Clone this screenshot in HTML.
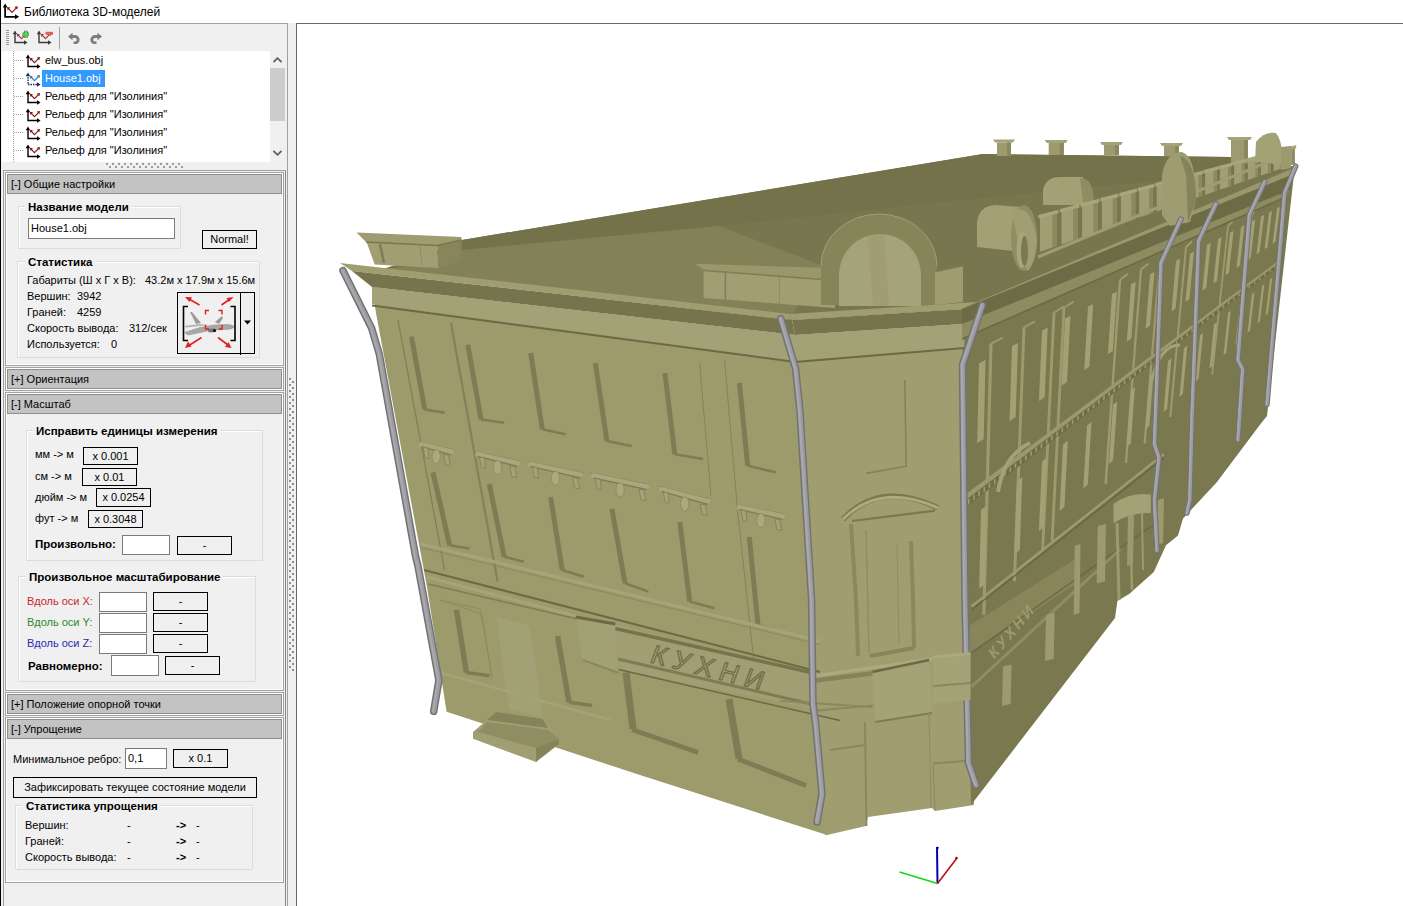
<!DOCTYPE html>
<html><head><meta charset="utf-8">
<style>
*{box-sizing:border-box}
html,body{margin:0;padding:0}
body{width:1403px;height:906px;overflow:hidden;position:relative;background:#fff;font-family:"Liberation Sans",sans-serif;font-size:11px;color:#000}
.a{position:absolute}
.t{position:absolute;white-space:nowrap;line-height:14px;height:14px}
.b{font-weight:bold;font-size:11.5px}
.hdr{position:absolute;left:7px;width:275px;height:20px;border:1px solid #8e8e8e;background:#c3c3c3}
.hdr span{position:absolute;left:3px;top:2px;line-height:14px;white-space:nowrap}
.sec{position:absolute;left:5px;width:279px;border:1px solid #a2a2a2;box-shadow:inset 0 0 0 1px #fff}
.gb{position:absolute;border:1px solid #dcdcdc;box-shadow:inset 1px 1px 0 #fff}
.gt{position:absolute;background:#f0f0f0;padding:0 3px;font-weight:bold;font-size:11.5px;line-height:14px;white-space:nowrap}
.inp{position:absolute;background:#fff;border:1px solid #7a7a7a;}
.btn{position:absolute;background:#f0f0f0;border:1px solid #000;text-align:center;line-height:16px;white-space:nowrap}
</style></head><body>
<!-- left black edge -->
<div class="a" style="left:0;top:0;width:1px;height:906px;background:#000"></div>
<!-- title -->
<svg class="a" style="left:3px;top:3px" width="17" height="17" viewBox="0 0 16 16">
<path d="M2 2.5V13H13" fill="none" stroke="#000" stroke-width="1.6"/>
<path d="M-0.3 4.3L2 0.5L4.3 4.3Z M11.3 10.7L15.2 13L11.3 15.3Z" fill="#000"/>
<path d="M5 5L8.5 8.8L13 4.2" fill="none" stroke="#8b1a1a" stroke-width="1.1"/>
<path d="M3.8 3.8L7 4.3L4.3 7Z M14 3L13.4 6.3L10.8 3.6Z" fill="#8b1a1a"/>
</svg>
<div class="t" style="left:24px;top:5px;font-size:12px;line-height:15px">Библиотека 3D-моделей</div>

<!-- panel -->
<div class="a" style="left:1px;top:23px;width:287px;height:883px;background:#f0f0f0"></div>
<div class="a" style="left:1px;top:23px;width:287px;height:1px;background:#a0a0a0"></div>
<div class="a" style="left:285px;top:170px;width:1px;height:736px;background:#858585"></div>
<div class="a" style="left:287px;top:23px;width:1px;height:883px;background:#a0a0a0"></div>
<!-- splitter -->
<div class="a" style="left:288px;top:23px;width:8px;height:883px;background:#f0f0f0"></div>
<div class="a" style="left:296px;top:23px;width:1px;height:883px;background:#696969"></div>
<div class="a" style="left:289px;top:378px;width:2px;height:290px;background:repeating-linear-gradient(#8e8e8e 0 2px,transparent 2px 6px)"></div>
<div class="a" style="left:292px;top:381px;width:2px;height:290px;background:repeating-linear-gradient(#8e8e8e 0 2px,transparent 2px 6px)"></div>
<div class="a" style="left:296px;top:23px;width:1107px;height:1px;background:#696969"></div>

<!-- toolbar -->
<div class="a" style="left:6px;top:30px;width:3px;height:16px;background:repeating-linear-gradient(#9a9a9a 0 1px,transparent 1px 2px)"></div>
<svg class="a" style="left:13px;top:30px" width="16" height="16" viewBox="0 0 16 16">
<path d="M2 2.5V12.5H12.5" fill="none" stroke="#3a3a3a" stroke-width="1.4"/>
<path d="M-0.2 4.2L2 0.6L4.2 4.2Z M11 10.3L14.6 12.5L11 14.7Z" fill="#3a3a3a"/>
<path d="M5 5L8.5 8.6L13 4" fill="none" stroke="#a04040" stroke-width="1.1"/>
<path d="M3.8 3.8L7 4.3L4.3 7Z M14 3L13.4 6.3L10.8 3.6Z" fill="#a04040"/><path d="M9.5 4.3H16.3M12.9 0.8V7.8" stroke="#2e8a2e" stroke-width="3.6"/><path d="M9.8 4.3H16M12.9 1.1V7.5" stroke="#5ccf5c" stroke-width="2.2"/>
</svg><svg class="a" style="left:37px;top:30px" width="16" height="16" viewBox="0 0 16 16">
<path d="M2 2.5V12.5H12.5" fill="none" stroke="#3a3a3a" stroke-width="1.4"/>
<path d="M-0.2 4.2L2 0.6L4.2 4.2Z M11 10.3L14.6 12.5L11 14.7Z" fill="#3a3a3a"/>
<path d="M5 5L8.5 8.6L13 4" fill="none" stroke="#a04040" stroke-width="1.1"/>
<path d="M3.8 3.8L7 4.3L4.3 7Z M14 3L13.4 6.3L10.8 3.6Z" fill="#a04040"/><path d="M8.5 3.3H16" stroke="#e06050" stroke-width="3"/>
</svg>
<div class="a" style="left:59px;top:27px;width:1px;height:22px;background:#a0a0a0"></div>
<svg class="a" style="left:67px;top:32px" width="13" height="12" viewBox="0 0 13 12"><path d="M1 4.5L5.5 0.8V8.2Z" fill="#7c7c7c"/><path d="M4.5 4.5H8A3.2 3.2 0 0 1 8 10.9H6.5" fill="none" stroke="#7c7c7c" stroke-width="2.8"/></svg>
<svg class="a" style="left:90px;top:32px" width="13" height="12" viewBox="0 0 13 12"><path d="M12 4.5L7.5 0.8V8.2Z" fill="#7c7c7c"/><path d="M8.5 4.5H5A3.2 3.2 0 0 0 5 10.9H6.5" fill="none" stroke="#7c7c7c" stroke-width="2.8"/></svg>
<!-- tree -->
<div class="a" style="left:2px;top:51px;width:268px;height:111px;background:#fff"></div>
<div class="a" style="left:13px;top:51px;width:1px;height:111px;background:repeating-linear-gradient(#a0a0a0 0 1px,transparent 1px 2px)"></div>
<div class="a" style="left:14px;top:60px;width:9px;height:1px;background:repeating-linear-gradient(90deg,#a0a0a0 0 1px,transparent 1px 2px)"></div>
<svg class="a" style="left:26px;top:54px" width="16" height="16" viewBox="0 0 16 16">
<path d="M2 2.5V12.5H12.5" fill="none" stroke="#000" stroke-width="1.4"/>
<path d="M-0.2 4.2L2 0.6L4.2 4.2Z M11 10.3L14.6 12.5L11 14.7Z" fill="#000"/>
<path d="M5 5L8.5 8.6L13 4" fill="none" stroke="#8b1a1a" stroke-width="1.1"/>
<path d="M3.8 3.8L7 4.3L4.3 7Z M14 3L13.4 6.3L10.8 3.6Z" fill="#8b1a1a"/>
</svg><div class="t" style="left:45px;top:53px">elw_bus.obj</div>
<div class="a" style="left:14px;top:78px;width:9px;height:1px;background:repeating-linear-gradient(90deg,#a0a0a0 0 1px,transparent 1px 2px)"></div>
<svg class="a" style="left:26px;top:72px" width="16" height="16" viewBox="0 0 16 16">
<path d="M2 2.5V12.5H12.5" fill="none" stroke="#1c2c5c" stroke-width="1.4" stroke-dasharray="1.5 1"/>
<path d="M-0.2 4.2L2 0.6L4.2 4.2Z M11 10.3L14.6 12.5L11 14.7Z" fill="#1c2c5c"/>
<path d="M5 5L8.5 8.6L13 4" fill="none" stroke="#3a78b8" stroke-width="1.1"/>
<path d="M3.8 3.8L7 4.3L4.3 7Z M14 3L13.4 6.3L10.8 3.6Z" fill="#3a78b8"/>
</svg><div class="a" style="left:42px;top:70px;width:63px;height:17px;background:#3399ff"></div><div class="t" style="left:45px;top:71px;color:#fff">House1.obj</div>
<div class="a" style="left:14px;top:96px;width:9px;height:1px;background:repeating-linear-gradient(90deg,#a0a0a0 0 1px,transparent 1px 2px)"></div>
<svg class="a" style="left:26px;top:90px" width="16" height="16" viewBox="0 0 16 16">
<path d="M2 2.5V12.5H12.5" fill="none" stroke="#000" stroke-width="1.4"/>
<path d="M-0.2 4.2L2 0.6L4.2 4.2Z M11 10.3L14.6 12.5L11 14.7Z" fill="#000"/>
<path d="M5 5L8.5 8.6L13 4" fill="none" stroke="#8b1a1a" stroke-width="1.1"/>
<path d="M3.8 3.8L7 4.3L4.3 7Z M14 3L13.4 6.3L10.8 3.6Z" fill="#8b1a1a"/>
</svg><div class="t" style="left:45px;top:89px">Рельеф для "Изолиния"</div>
<div class="a" style="left:14px;top:114px;width:9px;height:1px;background:repeating-linear-gradient(90deg,#a0a0a0 0 1px,transparent 1px 2px)"></div>
<svg class="a" style="left:26px;top:108px" width="16" height="16" viewBox="0 0 16 16">
<path d="M2 2.5V12.5H12.5" fill="none" stroke="#000" stroke-width="1.4"/>
<path d="M-0.2 4.2L2 0.6L4.2 4.2Z M11 10.3L14.6 12.5L11 14.7Z" fill="#000"/>
<path d="M5 5L8.5 8.6L13 4" fill="none" stroke="#8b1a1a" stroke-width="1.1"/>
<path d="M3.8 3.8L7 4.3L4.3 7Z M14 3L13.4 6.3L10.8 3.6Z" fill="#8b1a1a"/>
</svg><div class="t" style="left:45px;top:107px">Рельеф для "Изолиния"</div>
<div class="a" style="left:14px;top:132px;width:9px;height:1px;background:repeating-linear-gradient(90deg,#a0a0a0 0 1px,transparent 1px 2px)"></div>
<svg class="a" style="left:26px;top:126px" width="16" height="16" viewBox="0 0 16 16">
<path d="M2 2.5V12.5H12.5" fill="none" stroke="#000" stroke-width="1.4"/>
<path d="M-0.2 4.2L2 0.6L4.2 4.2Z M11 10.3L14.6 12.5L11 14.7Z" fill="#000"/>
<path d="M5 5L8.5 8.6L13 4" fill="none" stroke="#8b1a1a" stroke-width="1.1"/>
<path d="M3.8 3.8L7 4.3L4.3 7Z M14 3L13.4 6.3L10.8 3.6Z" fill="#8b1a1a"/>
</svg><div class="t" style="left:45px;top:125px">Рельеф для "Изолиния"</div>
<div class="a" style="left:14px;top:150px;width:9px;height:1px;background:repeating-linear-gradient(90deg,#a0a0a0 0 1px,transparent 1px 2px)"></div>
<svg class="a" style="left:26px;top:144px" width="16" height="16" viewBox="0 0 16 16">
<path d="M2 2.5V12.5H12.5" fill="none" stroke="#000" stroke-width="1.4"/>
<path d="M-0.2 4.2L2 0.6L4.2 4.2Z M11 10.3L14.6 12.5L11 14.7Z" fill="#000"/>
<path d="M5 5L8.5 8.6L13 4" fill="none" stroke="#8b1a1a" stroke-width="1.1"/>
<path d="M3.8 3.8L7 4.3L4.3 7Z M14 3L13.4 6.3L10.8 3.6Z" fill="#8b1a1a"/>
</svg><div class="t" style="left:45px;top:143px">Рельеф для "Изолиния"</div>
<div class="a" style="left:270px;top:51px;width:15px;height:111px;background:#f0f0f0"></div>
<div class="a" style="left:270px;top:68px;width:15px;height:53px;background:#cdcdcd"></div>
<svg class="a" style="left:273px;top:57px" width="9" height="6" viewBox="0 0 9 6"><path d="M0.5 5L4.5 1.2L8.5 5" fill="none" stroke="#606060" stroke-width="1.8"/></svg>
<svg class="a" style="left:273px;top:150px" width="9" height="6" viewBox="0 0 9 6"><path d="M0.5 1L4.5 4.8L8.5 1" fill="none" stroke="#606060" stroke-width="1.8"/></svg>
<div class="a" style="left:106px;top:163px;width:78px;height:2px;background:repeating-linear-gradient(90deg,#9a9a9a 0 2px,transparent 2px 6px)"></div>
<div class="a" style="left:109px;top:166px;width:75px;height:2px;background:repeating-linear-gradient(90deg,#9a9a9a 0 2px,transparent 2px 6px)"></div>


<!-- outer container -->
<div class="a" style="left:3px;top:170px;width:1px;height:736px;background:#a0a0a0"></div>
<div class="a" style="left:3px;top:170px;width:283px;height:1px;background:#a0a0a0"></div>

<!-- section 1 -->
<div class="sec" style="top:172px;height:194px"></div>
<div class="hdr" style="top:174px"><span>[-] Общие настройки</span></div>
<!-- section 2 -->
<div class="sec" style="top:367px;height:24px"></div>
<div class="hdr" style="top:369px"><span>[+] Ориентация</span></div>
<!-- section 3 -->
<div class="sec" style="top:392px;height:299px"></div>
<div class="hdr" style="top:394px"><span>[-] Масштаб</span></div>
<!-- section 4 -->
<div class="sec" style="top:692px;height:24px"></div>
<div class="hdr" style="top:694px"><span>[+] Положение опорной точки</span></div>
<!-- section 5 -->
<div class="sec" style="top:717px;height:166px"></div>
<div class="hdr" style="top:719px"><span>[-] Упрощение</span></div>

<div class="gb" style="left:18px;top:206px;width:163px;height:43px"></div>
<div class="gt" style="left:25px;top:200px">Название модели</div>
<div class="inp" style="left:28px;top:218px;width:147px;height:21px;padding-left:2px;line-height:19px">House1.obj</div>
<div class="btn" style="left:202px;top:230px;width:55px;height:19px;line-height:17px">Normal!</div>
<div class="gb" style="left:17px;top:261px;width:243px;height:97px"></div>
<div class="gt" style="left:25px;top:255px">Статистика</div>
<div class="t" style="left:27px;top:273px;">Габариты (Ш x Г x В):</div>
<div class="t" style="left:145px;top:273px;">43.2м x 17.9м x 15.6м</div>
<div class="t" style="left:27px;top:289px;">Вершин:</div>
<div class="t" style="left:77px;top:289px;">3942</div>
<div class="t" style="left:27px;top:305px;">Граней:</div>
<div class="t" style="left:77px;top:305px;">4259</div>
<div class="t" style="left:27px;top:321px;">Скорость вывода:</div>
<div class="t" style="left:129px;top:321px;">312/сек</div>
<div class="t" style="left:27px;top:337px;">Используется:</div>
<div class="t" style="left:111px;top:337px;">0</div>
<div class="a" style="left:177px;top:292px;width:78px;height:62px;border:1px solid #000;background:#f0f0f0"></div>
<div class="a" style="left:240px;top:292px;width:1px;height:63px;background:#000"></div>
<svg class="a" style="left:177px;top:292px" width="79" height="63" viewBox="177 292 79 63">
<path d="M244 320.5H251L247.5 324.5Z" fill="#000"/>
<path d="M188 306.5H183.5V340.5H188M230.5 306.5H235V340.5H230.5" fill="none" stroke="#000" stroke-width="1.6"/>
<g fill="none" stroke="#e02020" stroke-width="1.6">
<path d="M199.5 305L189 299"/><path d="M221.5 305L230 299"/><path d="M201.5 337.5L189 345.5"/><path d="M218 337.5L228 345"/>
</g>
<g fill="#e02020">
<path d="M185 297L192 297.2L189.5 302Z"/><path d="M233.5 297L229 302L226.5 298Z"/><path d="M185 348L188 341.5L191.5 346.5Z"/><path d="M231.5 348L225 347L228.5 342Z"/>
</g>
<path d="M184.5 332.5L200 327.5L214 325L228 324.5Q234 325 234 327Q233 329 226 329.5L212 330L188 335Z" fill="#a8a8a8" stroke="#888" stroke-width="0.5"/>
<path d="M184 326L200 324L210 325L186 327.5Z" fill="#b4b4b4"/>
<path d="M190 312L192 312L201 323L196 324Z" fill="#9a9a9a"/>
<path d="M215 322L222 316L223 318L219 324Z" fill="#9a9a9a"/>
<path d="M207 329L215 328.5L216 332L209 332.5Z" fill="#777"/><circle cx="214.5" cy="330.5" r="1.6" fill="#111"/>
<g fill="none" stroke="#e02020" stroke-width="1.4">
<path d="M205.5 314.5V310.5H209M218.5 310.5H222V314.5M205.5 325V329H209M218.5 329H222V325"/>
</g>
</svg>

<div class="gb" style="left:26px;top:430px;width:237px;height:131px"></div>
<div class="gt" style="left:33px;top:424px">Исправить единицы измерения</div>
<div class="t" style="left:35px;top:447px;">мм -&gt; м</div>
<div class="btn" style="left:83px;top:447px;width:55px;height:18px;line-height:16px">x 0.001</div>
<div class="t" style="left:35px;top:469px;">см -&gt; м</div>
<div class="btn" style="left:82px;top:468px;width:55px;height:18px;line-height:16px">x 0.01</div>
<div class="t" style="left:35px;top:490px;">дюйм -&gt; м</div>
<div class="btn" style="left:96px;top:488px;width:55px;height:19px;line-height:17px">x 0.0254</div>
<div class="t" style="left:35px;top:511px;">фут -&gt; м</div>
<div class="btn" style="left:88px;top:510px;width:55px;height:18px;line-height:16px">x 0.3048</div>
<div class="t" style="left:35px;top:537px;font-weight:bold;font-size:11.5px">Произвольно:</div>
<div class="inp" style="left:122px;top:535px;width:48px;height:20px;padding-left:2px;line-height:18px"></div>
<div class="btn" style="left:177px;top:536px;width:55px;height:19px;line-height:17px">-</div>
<div class="gb" style="left:18px;top:576px;width:238px;height:106px"></div>
<div class="gt" style="left:26px;top:570px">Произвольное масштабирование</div>
<div class="t" style="left:27px;top:594px;color:#c8282c">Вдоль оси X:</div>
<div class="inp" style="left:99px;top:592px;width:48px;height:20px;padding-left:2px;line-height:18px"></div>
<div class="btn" style="left:153px;top:592px;width:55px;height:19px;line-height:17px">-</div>
<div class="t" style="left:27px;top:615px;color:#2a8a2a">Вдоль оси Y:</div>
<div class="inp" style="left:99px;top:613px;width:48px;height:20px;padding-left:2px;line-height:18px"></div>
<div class="btn" style="left:153px;top:613px;width:55px;height:19px;line-height:17px">-</div>
<div class="t" style="left:27px;top:636px;color:#2a2ab4">Вдоль оси Z:</div>
<div class="inp" style="left:99px;top:634px;width:48px;height:20px;padding-left:2px;line-height:18px"></div>
<div class="btn" style="left:153px;top:634px;width:55px;height:19px;line-height:17px">-</div>
<div class="t" style="left:28px;top:659px;font-weight:bold;font-size:11.5px">Равномерно:</div>
<div class="inp" style="left:111px;top:655px;width:48px;height:21px;padding-left:2px;line-height:19px"></div>
<div class="btn" style="left:165px;top:656px;width:55px;height:19px;line-height:17px">-</div>
<div class="t" style="left:13px;top:752px;">Минимальное ребро:</div>
<div class="inp" style="left:125px;top:748px;width:42px;height:21px;padding-left:2px;line-height:19px">0,1</div>
<div class="btn" style="left:173px;top:749px;width:55px;height:19px;line-height:17px">x 0.1</div>
<div class="btn" style="left:13px;top:777px;width:244px;height:21px;line-height:19px">Зафиксировать текущее состояние модели</div>
<div class="gb" style="left:15px;top:805px;width:238px;height:65px"></div>
<div class="gt" style="left:23px;top:799px">Статистика упрощения</div>
<div class="t" style="left:25px;top:818px;">Вершин:</div>
<div class="t" style="left:127px;top:818px;">-</div>
<div class="t" style="left:176px;top:818px;font-weight:bold">-&gt;</div>
<div class="t" style="left:196px;top:818px;">-</div>
<div class="t" style="left:25px;top:834px;">Граней:</div>
<div class="t" style="left:127px;top:834px;">-</div>
<div class="t" style="left:176px;top:834px;font-weight:bold">-&gt;</div>
<div class="t" style="left:196px;top:834px;">-</div>
<div class="t" style="left:25px;top:850px;">Скорость вывода:</div>
<div class="t" style="left:127px;top:850px;">-</div>
<div class="t" style="left:176px;top:850px;font-weight:bold">-&gt;</div>
<div class="t" style="left:196px;top:850px;">-</div>


<!-- viewport -->
<svg id="vp" class="a" style="left:297px;top:24px" width="1106" height="882" viewBox="297 24 1106 882">
<polygon points="437.0,250.0 462.0,240.0 983.0,154.0 1230.0,157.0 1296.0,167.0 1294.0,176.0 977.0,308.0 790.0,320.0 375.0,272.0" fill="#78764e" />
<polygon points="462.0,240.0 983.0,154.0 1230.0,157.0 1296.0,167.0 1000.0,196.0 719.0,226.0 462.0,250.0" fill="#74724a" />
<polygon points="462.0,250.0 719.0,226.0 823.0,266.0 790.0,318.0 375.0,270.0 437.0,262.0" fill="#838157" />
<polygon points="372.0,287.0 795.0,335.0 827.0,835.0 640.0,775.0 446.6,711.7 427.0,587.0 376.0,313.0" fill="#9d9b6b" />
<polygon points="793.0,335.0 965.0,324.0 974.0,805.0 935.0,811.0 932.0,808.0 868.0,817.0 866.0,826.0 827.0,835.0 825.0,835.0" fill="#a09e70" />
<polygon points="962.0,309.0 1294.0,174.0 1267.0,416.0 1260.7,423.7 1217.0,482.0 1183.0,518.5 1178.0,535.5 1166.0,545.2 1153.8,572.0 1129.5,593.8 1117.4,601.0 1115.0,618.0 971.0,805.0" fill="#7a784e" />
<path d="M398.0 320.0L444.6 570.0" fill="none" stroke="#7f7d55" stroke-width="1.2" stroke-linecap="butt" stroke-linejoin="round" />
<path d="M451.0 323.0L497.6 581.7" fill="none" stroke="#84825a" stroke-width="2.2" stroke-linecap="butt" stroke-linejoin="round" />
<path d="M699.6 363.0L711.0 496.0" fill="none" stroke="#84825a" stroke-width="1" stroke-linecap="butt" stroke-linejoin="round" />
<path d="M724.5 360.0L737.7 512.0" fill="none" stroke="#84825a" stroke-width="1" stroke-linecap="butt" stroke-linejoin="round" />
<path d="M737.7 512.0L757.0 690.0" fill="none" stroke="#84825a" stroke-width="1" stroke-linecap="butt" stroke-linejoin="round" />
<path d="M411.5 336.6L424.7 409.4" fill="none" stroke="#7e7c54" stroke-width="5" stroke-linecap="butt" stroke-linejoin="round" />
<path d="M424.7 409.4L444.6 412.7" fill="none" stroke="#7e7c54" stroke-width="2.5" stroke-linecap="butt" stroke-linejoin="round" />
<path d="M467.8 344.8L481.0 419.4" fill="none" stroke="#7e7c54" stroke-width="5" stroke-linecap="butt" stroke-linejoin="round" />
<path d="M481.0 419.4L504.2 422.7" fill="none" stroke="#7e7c54" stroke-width="2.5" stroke-linecap="butt" stroke-linejoin="round" />
<path d="M530.7 353.0L542.3 429.3" fill="none" stroke="#7e7c54" stroke-width="5" stroke-linecap="butt" stroke-linejoin="round" />
<path d="M542.3 429.3L565.5 434.3" fill="none" stroke="#7e7c54" stroke-width="2.5" stroke-linecap="butt" stroke-linejoin="round" />
<path d="M595.3 363.0L606.9 440.9" fill="none" stroke="#7e7c54" stroke-width="5" stroke-linecap="butt" stroke-linejoin="round" />
<path d="M606.9 440.9L631.7 445.9" fill="none" stroke="#7e7c54" stroke-width="2.5" stroke-linecap="butt" stroke-linejoin="round" />
<path d="M664.9 373.0L674.8 454.2" fill="none" stroke="#7e7c54" stroke-width="5" stroke-linecap="butt" stroke-linejoin="round" />
<path d="M674.8 454.2L703.0 459.0" fill="none" stroke="#7e7c54" stroke-width="2.5" stroke-linecap="butt" stroke-linejoin="round" />
<path d="M739.4 383.0L747.7 465.7" fill="none" stroke="#7e7c54" stroke-width="5" stroke-linecap="butt" stroke-linejoin="round" />
<path d="M747.7 465.7L775.8 472.4" fill="none" stroke="#7e7c54" stroke-width="2.5" stroke-linecap="butt" stroke-linejoin="round" />
<path d="M433.0 472.4L449.6 545.2" fill="none" stroke="#7e7c54" stroke-width="5" stroke-linecap="butt" stroke-linejoin="round" />
<path d="M449.6 545.2L469.4 548.5" fill="none" stroke="#7e7c54" stroke-width="2.5" stroke-linecap="butt" stroke-linejoin="round" />
<path d="M489.3 484.0L504.2 556.8" fill="none" stroke="#7e7c54" stroke-width="5" stroke-linecap="butt" stroke-linejoin="round" />
<path d="M504.2 556.8L524.0 561.8" fill="none" stroke="#7e7c54" stroke-width="2.5" stroke-linecap="butt" stroke-linejoin="round" />
<path d="M550.6 497.2L562.2 570.0" fill="none" stroke="#7e7c54" stroke-width="5" stroke-linecap="butt" stroke-linejoin="round" />
<path d="M562.2 570.0L583.7 576.7" fill="none" stroke="#7e7c54" stroke-width="2.5" stroke-linecap="butt" stroke-linejoin="round" />
<path d="M611.9 508.8L625.0 583.3" fill="none" stroke="#7e7c54" stroke-width="5" stroke-linecap="butt" stroke-linejoin="round" />
<path d="M625.0 583.3L648.3 591.6" fill="none" stroke="#7e7c54" stroke-width="2.5" stroke-linecap="butt" stroke-linejoin="round" />
<path d="M679.8 522.0L689.7 601.5" fill="none" stroke="#7e7c54" stroke-width="5" stroke-linecap="butt" stroke-linejoin="round" />
<path d="M689.7 601.5L714.5 608.2" fill="none" stroke="#7e7c54" stroke-width="2.5" stroke-linecap="butt" stroke-linejoin="round" />
<path d="M749.3 537.0L758.0 625.0" fill="none" stroke="#7e7c54" stroke-width="5" stroke-linecap="butt" stroke-linejoin="round" />
<path d="M758.0 625.0L782.0 632.0" fill="none" stroke="#7e7c54" stroke-width="2.5" stroke-linecap="butt" stroke-linejoin="round" />
<path d="M418.0 441.6L454.5 449.8" fill="none" stroke="#8a885e" stroke-width="1" stroke-linecap="butt" stroke-linejoin="round" />
<path d="M419.0 444.1L453.5 452.3" fill="none" stroke="#a9a77c" stroke-width="5" stroke-linecap="butt" stroke-linejoin="round" />
<path d="M421.0 446.6L451.5 454.8" fill="none" stroke="#7f7d55" stroke-width="1.3" stroke-linecap="butt" stroke-linejoin="round" />
<ellipse cx="436.2" cy="456.7" rx="4.2" ry="7" fill="#abA97d" stroke="#8a885e" stroke-width="0.8"/>
<polygon points="423.0,447.1 428.0,448.1 429.0,458.6 425.0,457.6" fill="#a4a278" stroke="#7f7d55" stroke-width="0.8"/>
<polygon points="443.5,454.3 448.5,455.3 450.5,465.8 445.5,464.8" fill="#a4a278" stroke="#7f7d55" stroke-width="0.8"/>
<path d="M474.4 451.5L520.8 461.4" fill="none" stroke="#8a885e" stroke-width="1" stroke-linecap="butt" stroke-linejoin="round" />
<path d="M475.4 454.0L519.8 463.9" fill="none" stroke="#a9a77c" stroke-width="5" stroke-linecap="butt" stroke-linejoin="round" />
<path d="M477.4 456.5L517.8 466.4" fill="none" stroke="#7f7d55" stroke-width="1.3" stroke-linecap="butt" stroke-linejoin="round" />
<ellipse cx="497.6" cy="467.4" rx="4.2" ry="7" fill="#abA97d" stroke="#8a885e" stroke-width="0.8"/>
<polygon points="479.4,457.0 484.4,458.0 485.4,468.5 481.4,467.5" fill="#a4a278" stroke="#7f7d55" stroke-width="0.8"/>
<polygon points="509.8,465.9 514.8,466.9 516.8,477.4 511.8,476.4" fill="#a4a278" stroke="#7f7d55" stroke-width="0.8"/>
<path d="M527.4 461.4L583.7 473.0" fill="none" stroke="#8a885e" stroke-width="1" stroke-linecap="butt" stroke-linejoin="round" />
<path d="M528.4 463.9L582.7 475.5" fill="none" stroke="#a9a77c" stroke-width="5" stroke-linecap="butt" stroke-linejoin="round" />
<path d="M530.4 466.4L580.7 478.0" fill="none" stroke="#7f7d55" stroke-width="1.3" stroke-linecap="butt" stroke-linejoin="round" />
<ellipse cx="555.5" cy="478.2" rx="4.2" ry="7" fill="#abA97d" stroke="#8a885e" stroke-width="0.8"/>
<polygon points="532.4,466.9 537.4,467.9 538.4,478.4 534.4,477.4" fill="#a4a278" stroke="#7f7d55" stroke-width="0.8"/>
<polygon points="572.7,477.5 577.7,478.5 579.7,489.0 574.7,488.0" fill="#a4a278" stroke="#7f7d55" stroke-width="0.8"/>
<path d="M590.3 473.0L650.0 484.6" fill="none" stroke="#8a885e" stroke-width="1" stroke-linecap="butt" stroke-linejoin="round" />
<path d="M591.3 475.5L649.0 487.1" fill="none" stroke="#a9a77c" stroke-width="5" stroke-linecap="butt" stroke-linejoin="round" />
<path d="M593.3 478.0L647.0 489.6" fill="none" stroke="#7f7d55" stroke-width="1.3" stroke-linecap="butt" stroke-linejoin="round" />
<ellipse cx="620.1" cy="489.8" rx="4.2" ry="7" fill="#abA97d" stroke="#8a885e" stroke-width="0.8"/>
<polygon points="595.3,478.5 600.3,479.5 601.3,490.0 597.3,489.0" fill="#a4a278" stroke="#7f7d55" stroke-width="0.8"/>
<polygon points="639.0,489.1 644.0,490.1 646.0,500.6 641.0,499.6" fill="#a4a278" stroke="#7f7d55" stroke-width="0.8"/>
<path d="M658.2 486.3L711.2 499.5" fill="none" stroke="#8a885e" stroke-width="1" stroke-linecap="butt" stroke-linejoin="round" />
<path d="M659.2 488.8L710.2 502.0" fill="none" stroke="#a9a77c" stroke-width="5" stroke-linecap="butt" stroke-linejoin="round" />
<path d="M661.2 491.3L708.2 504.5" fill="none" stroke="#7f7d55" stroke-width="1.3" stroke-linecap="butt" stroke-linejoin="round" />
<ellipse cx="684.7" cy="503.9" rx="4.2" ry="7" fill="#abA97d" stroke="#8a885e" stroke-width="0.8"/>
<polygon points="663.2,491.8 668.2,492.8 669.2,503.3 665.2,502.3" fill="#a4a278" stroke="#7f7d55" stroke-width="0.8"/>
<polygon points="700.2,504.0 705.2,505.0 707.2,515.5 702.2,514.5" fill="#a4a278" stroke="#7f7d55" stroke-width="0.8"/>
<path d="M736.0 504.5L785.8 514.4" fill="none" stroke="#8a885e" stroke-width="1" stroke-linecap="butt" stroke-linejoin="round" />
<path d="M737.0 507.0L784.8 516.9" fill="none" stroke="#a9a77c" stroke-width="5" stroke-linecap="butt" stroke-linejoin="round" />
<path d="M739.0 509.5L782.8 519.4" fill="none" stroke="#7f7d55" stroke-width="1.3" stroke-linecap="butt" stroke-linejoin="round" />
<ellipse cx="760.9" cy="520.5" rx="4.2" ry="7" fill="#abA97d" stroke="#8a885e" stroke-width="0.8"/>
<polygon points="741.0,510.0 746.0,511.0 747.0,521.5 743.0,520.5" fill="#a4a278" stroke="#7f7d55" stroke-width="0.8"/>
<polygon points="774.8,518.9 779.8,519.9 781.8,530.4 776.8,529.4" fill="#a4a278" stroke="#7f7d55" stroke-width="0.8"/>
<path d="M421.0 544.0L820.0 641.0" fill="none" stroke="#a6a47a" stroke-width="3" stroke-linecap="butt" stroke-linejoin="round" />
<path d="M421.0 547.5L820.0 644.5" fill="none" stroke="#8a885e" stroke-width="1" stroke-linecap="butt" stroke-linejoin="round" />
<path d="M424.0 570.0L820.0 672.0" fill="none" stroke="#6c6a44" stroke-width="2" stroke-linecap="butt" stroke-linejoin="round" />
<path d="M427.0 577.0L820.0 680.0" fill="none" stroke="#a6a47a" stroke-width="3" stroke-linecap="butt" stroke-linejoin="round" />
<path d="M428.0 584.0L590.0 622.0" fill="none" stroke="#7e7c54" stroke-width="1.5" stroke-linecap="butt" stroke-linejoin="round" />
<path d="M440.0 600.0L480.0 609.0L492.0 676.0" fill="none" stroke="#8a885e" stroke-width="0.8" stroke-linecap="butt" stroke-linejoin="round" />
<path d="M456.4 609.6L466.4 672.5" fill="none" stroke="#7e7c54" stroke-width="5.5" stroke-linecap="butt" stroke-linejoin="round" />
<path d="M466.4 672.5L489.6 675.8" fill="none" stroke="#7e7c54" stroke-width="3.5" stroke-linecap="butt" stroke-linejoin="round" />
<path d="M440.0 600.0L482.0 614.0L492.0 678.0" fill="none" stroke="#8a885d" stroke-width="0.8" stroke-linecap="butt" stroke-linejoin="round" />
<polygon points="496.0,616.0 530.0,626.0 543.0,718.0 509.0,709.0" fill="#a2a075" />
<path d="M557.5 636.0L569.0 702.3" fill="none" stroke="#7e7c54" stroke-width="5.5" stroke-linecap="butt" stroke-linejoin="round" />
<path d="M569.0 702.3L592.0 705.6" fill="none" stroke="#7e7c54" stroke-width="3.5" stroke-linecap="butt" stroke-linejoin="round" />
<path d="M440.0 672.5L610.0 720.0" fill="none" stroke="#a4a277" stroke-width="3" stroke-linecap="butt" stroke-linejoin="round" />
<path d="M626.0 672.5L633.0 728.8" fill="none" stroke="#7e7c54" stroke-width="7" stroke-linecap="butt" stroke-linejoin="round" />
<path d="M632.0 729.5L698.2 752.5" fill="none" stroke="#7e7c54" stroke-width="5" stroke-linecap="butt" stroke-linejoin="round" />
<path d="M729.0 699.0L739.0 758.6" fill="none" stroke="#7e7c54" stroke-width="7" stroke-linecap="butt" stroke-linejoin="round" />
<path d="M738.0 759.0L805.9 785.5" fill="none" stroke="#7e7c54" stroke-width="5" stroke-linecap="butt" stroke-linejoin="round" />
<polygon points="575.7,616.2 615.4,622.8 618.7,672.5 582.3,659.2" fill="#a2a075" />
<path d="M575.7 617.0L615.4 624.0" fill="none" stroke="#6c6a44" stroke-width="3" stroke-linecap="butt" stroke-linejoin="round" />
<path d="M583.0 660.0L618.7 673.0" fill="none" stroke="#8a885d" stroke-width="2" stroke-linecap="butt" stroke-linejoin="round" />
<polygon points="615.4,627.8 811.0,670.8 811.0,709.0 618.7,669.2" fill="#a09e72" />
<path d="M615.4 628.5L811.0 672.5" fill="none" stroke="#76744c" stroke-width="3.5" stroke-linecap="butt" stroke-linejoin="round" />
<path d="M617.9 659.0L811.0 704.0" fill="none" stroke="#7e7c54" stroke-width="3" stroke-linecap="butt" stroke-linejoin="round" />
<path d="M618.7 669.5L840.0 720.5" fill="none" stroke="#6c6a44" stroke-width="1.4" stroke-linecap="butt" stroke-linejoin="round" />
<text x="0" y="0" transform="translate(649,662) rotate(14) skewX(-6)" font-family="Liberation Sans" font-size="26" letter-spacing="7" fill="#a9a77c" stroke="#6f6d47" stroke-width="1.3">КУХНИ</text>
<polygon points="473.0,732.0 496.0,712.0 542.6,718.9 559.0,738.7 536.0,762.0 473.0,738.7" fill="#a09e72" />
<polygon points="496.0,712.0 542.6,718.9 548.0,728.0 487.0,720.0" fill="#858359" />
<polygon points="487.0,722.0 548.0,730.0 559.0,738.7 536.0,748.0 478.0,732.0" fill="#8f8d62" />
<polygon points="536.0,748.0 559.0,738.7 559.0,744.0 536.0,762.0" fill="#858359" />
<path d="M904.8 380.0L906.2 466.2L866.0 473.4" fill="none" stroke="#84825a" stroke-width="1.6" stroke-linecap="butt" stroke-linejoin="round" />
<path d="M843 519.3 Q880 480 937.8 507.8" fill="none" stroke="#7a784f" stroke-width="5.5"/>
<path d="M843 519.3 Q880 482 937.8 507.8" fill="none" stroke="#acaa7e" stroke-width="3"/>
<path d="M852.0 521.0L935.0 510.7" fill="none" stroke="#7a784f" stroke-width="2.2" stroke-linecap="butt" stroke-linejoin="round" />
<path d="M851.0 524.0L856.0 600.0L858.0 656.0" fill="none" stroke="#8a885e" stroke-width="4" stroke-linecap="butt" stroke-linejoin="round" />
<path d="M866.0 530.0L869.0 652.0" fill="none" stroke="#8f8d62" stroke-width="1.5" stroke-linecap="butt" stroke-linejoin="round" />
<path d="M911.0 541.0L913.0 600.0L914.0 648.0" fill="none" stroke="#8a885e" stroke-width="4" stroke-linecap="butt" stroke-linejoin="round" />
<path d="M897.0 545.0L899.0 645.0" fill="none" stroke="#8f8d62" stroke-width="1" stroke-linecap="butt" stroke-linejoin="round" />
<path d="M870.0 656.0L914.0 648.0" fill="none" stroke="#878559" stroke-width="4" stroke-linecap="butt" stroke-linejoin="round" />
<path d="M815.7 675.7L970.6 653.4" fill="none" stroke="#acaa7e" stroke-width="3" stroke-linecap="butt" stroke-linejoin="round" />
<path d="M815.7 680.5L875.0 673.0" fill="none" stroke="#858359" stroke-width="4.5" stroke-linecap="butt" stroke-linejoin="round" />
<path d="M817.6 710.4L873.6 705.6" fill="none" stroke="#8a885e" stroke-width="2" stroke-linecap="butt" stroke-linejoin="round" />
<polygon points="872.3,671.3 929.0,659.4 932.0,713.0 875.3,722.0" fill="#a4a277" />
<path d="M872.3 672.0L929.0 660.0" fill="none" stroke="#6c6a44" stroke-width="2.5" stroke-linecap="butt" stroke-linejoin="round" />
<path d="M875.3 722.0L932.0 713.0" fill="none" stroke="#7e7c54" stroke-width="2" stroke-linecap="butt" stroke-linejoin="round" />
<path d="M865.0 722.0L866.4 826.0" fill="none" stroke="#8a885e" stroke-width="2" stroke-linecap="butt" stroke-linejoin="round" />
<path d="M929.0 713.0L931.0 808.0" fill="none" stroke="#8f8d62" stroke-width="1.2" stroke-linecap="butt" stroke-linejoin="round" />
<path d="M933.4 686.0L970.6 683.0" fill="none" stroke="#8a885e" stroke-width="2" stroke-linecap="butt" stroke-linejoin="round" />
<path d="M933.0 763.6L970.6 760.6" fill="none" stroke="#8a885e" stroke-width="2" stroke-linecap="butt" stroke-linejoin="round" />
<path d="M933.0 764.0L935.0 810.0" fill="none" stroke="#8a885e" stroke-width="1" stroke-linecap="butt" stroke-linejoin="round" />
<path d="M780.0 701.0L872.0 707.0" fill="none" stroke="#8a885e" stroke-width="2" stroke-linecap="butt" stroke-linejoin="round" />
<path d="M830.0 750.0L865.0 745.0" fill="none" stroke="#8a885e" stroke-width="2" stroke-linecap="butt" stroke-linejoin="round" />
<path d="M991.0 343.6L983.8 614.7" fill="none" stroke="#9c9a6e" stroke-width="3.1940000000000004" stroke-linecap="butt" stroke-linejoin="round" />
<path d="M991.0 343.6L1003.0 337.7" fill="none" stroke="#9c9a6e" stroke-width="2" stroke-linecap="butt" stroke-linejoin="round" />
<path d="M1024.0 327.3L1014.4 581.3" fill="none" stroke="#9c9a6e" stroke-width="2.996" stroke-linecap="butt" stroke-linejoin="round" />
<path d="M1024.0 327.3L1035.0 321.4" fill="none" stroke="#9c9a6e" stroke-width="2" stroke-linecap="butt" stroke-linejoin="round" />
<path d="M1054.0 312.5L1042.6 550.9" fill="none" stroke="#9c9a6e" stroke-width="2.8160000000000003" stroke-linecap="butt" stroke-linejoin="round" />
<path d="M1054.0 312.5L1064.1 306.5" fill="none" stroke="#9c9a6e" stroke-width="2" stroke-linecap="butt" stroke-linejoin="round" />
<path d="M1064.0 307.5L1052.1 540.7" fill="none" stroke="#9c9a6e" stroke-width="2.7560000000000002" stroke-linecap="butt" stroke-linejoin="round" />
<path d="M1064.0 307.5L1073.8 301.6" fill="none" stroke="#9c9a6e" stroke-width="2" stroke-linecap="butt" stroke-linejoin="round" />
<path d="M1120.0 279.8L1105.7 484.0" fill="none" stroke="#9c9a6e" stroke-width="2.42" stroke-linecap="butt" stroke-linejoin="round" />
<path d="M1120.0 279.8L1128.1 273.9" fill="none" stroke="#9c9a6e" stroke-width="2" stroke-linecap="butt" stroke-linejoin="round" />
<path d="M1141.0 269.5L1126.0 462.8" fill="none" stroke="#9c9a6e" stroke-width="2.294" stroke-linecap="butt" stroke-linejoin="round" />
<path d="M1141.0 269.5L1148.5 263.5" fill="none" stroke="#9c9a6e" stroke-width="2" stroke-linecap="butt" stroke-linejoin="round" />
<path d="M1160.0 260.1L1144.6 443.5" fill="none" stroke="#9c9a6e" stroke-width="2.18" stroke-linecap="butt" stroke-linejoin="round" />
<path d="M1160.0 260.1L1166.9 254.1" fill="none" stroke="#9c9a6e" stroke-width="2" stroke-linecap="butt" stroke-linejoin="round" />
<path d="M1186.0 247.2L1170.3 417.2" fill="none" stroke="#9c9a6e" stroke-width="2.024" stroke-linecap="butt" stroke-linejoin="round" />
<path d="M1186.0 247.2L1192.1 241.3" fill="none" stroke="#9c9a6e" stroke-width="2" stroke-linecap="butt" stroke-linejoin="round" />
<path d="M1228.0 226.4L1212.2 374.7" fill="none" stroke="#9c9a6e" stroke-width="1.7720000000000002" stroke-linecap="butt" stroke-linejoin="round" />
<path d="M1228.0 226.4L1232.9 220.5" fill="none" stroke="#9c9a6e" stroke-width="2" stroke-linecap="butt" stroke-linejoin="round" />
<path d="M1252.0 214.6L1236.4 350.3" fill="none" stroke="#9c9a6e" stroke-width="1.6280000000000001" stroke-linecap="butt" stroke-linejoin="round" />
<path d="M1252.0 214.6L1256.1 208.6" fill="none" stroke="#9c9a6e" stroke-width="2" stroke-linecap="butt" stroke-linejoin="round" />
<polygon points="979.0,363.2 985.5,359.9 983.7,438.9 977.2,443.3" fill="#a3a174" />
<polygon points="1012.0,346.1 1018.1,342.9 1015.6,417.1 1009.5,421.2" fill="#a3a174" />
<polygon points="1042.0,330.5 1047.7,327.5 1044.7,397.3 1038.9,401.1" fill="#a3a174" />
<polygon points="1065.0,318.5 1070.5,315.7 1067.0,382.0 1061.5,385.7" fill="#a3a174" />
<polygon points="1088.0,306.6 1093.2,303.9 1089.4,366.8 1084.2,370.3" fill="#a3a174" />
<polygon points="1112.0,294.1 1116.9,291.5 1112.8,350.9 1107.9,354.2" fill="#a3a174" />
<polygon points="1131.0,284.2 1135.7,281.8 1131.4,338.4 1126.8,341.5" fill="#a3a174" />
<polygon points="1150.0,274.3 1154.4,272.0 1150.1,325.8 1145.6,328.8" fill="#a3a174" />
<polygon points="1176.0,260.8 1180.1,258.6 1175.6,308.6 1171.5,311.4" fill="#a3a174" />
<polygon points="1190.0,253.5 1194.0,251.4 1189.4,299.3 1185.4,302.0" fill="#a3a174" />
<polygon points="1207.0,244.7 1210.8,242.7 1206.2,288.1 1202.4,290.6" fill="#a3a174" />
<polygon points="1218.0,238.9 1221.6,237.1 1217.0,280.8 1213.4,283.2" fill="#a3a174" />
<polygon points="1230.0,232.7 1233.5,230.9 1228.9,272.9 1225.4,275.2" fill="#a3a174" />
<polygon points="1241.0,227.0 1244.4,225.2 1239.8,265.6 1236.5,267.8" fill="#a3a174" />
<polygon points="1252.0,221.3 1255.2,219.6 1250.7,258.3 1247.5,260.5" fill="#a3a174" />
<polygon points="1261.0,216.6 1264.1,215.0 1259.6,252.3 1256.5,254.4" fill="#a3a174" />
<polygon points="1269.0,212.4 1272.0,210.8 1267.6,247.1 1264.6,249.1" fill="#a3a174" />
<polygon points="1277.0,208.3 1279.9,206.7 1275.5,241.8 1272.6,243.7" fill="#a3a174" />
<polygon points="966.0,494.0 1278.0,261.1 1278.0,263.7 966.0,500.0" fill="#9a986c" />
<polygon points="966.0,500.0 1278.0,263.7 1278.0,266.7 966.0,507.0" fill="#6f6d47" />
<polygon points="968.0,499.5 969.6,498.3 969.5,503.2 967.9,504.5" fill="#a09e72" />
<polygon points="973.2,495.5 974.8,494.3 974.7,499.2 973.1,500.5" fill="#a09e72" />
<polygon points="978.4,491.6 980.0,490.4 979.9,495.2 978.3,496.5" fill="#a09e72" />
<polygon points="983.6,487.6 985.2,486.4 985.1,491.2 983.5,492.5" fill="#a09e72" />
<polygon points="988.8,483.7 990.4,482.5 990.3,487.3 988.7,488.5" fill="#a09e72" />
<polygon points="994.0,479.7 995.6,478.5 995.5,483.3 993.9,484.5" fill="#a09e72" />
<polygon points="999.2,475.8 1000.8,474.6 1000.7,479.3 999.1,480.5" fill="#a09e72" />
<polygon points="1004.4,471.8 1006.0,470.6 1005.9,475.3 1004.3,476.5" fill="#a09e72" />
<polygon points="1009.6,467.9 1011.2,466.7 1011.0,471.3 1009.4,472.5" fill="#a09e72" />
<polygon points="1014.8,464.0 1016.4,462.7 1016.2,467.3 1014.6,468.5" fill="#a09e72" />
<polygon points="1020.0,460.0 1021.6,458.8 1021.4,463.3 1019.8,464.5" fill="#a09e72" />
<polygon points="1025.2,456.1 1026.8,454.8 1026.6,459.3 1025.0,460.5" fill="#a09e72" />
<polygon points="1030.4,452.1 1032.0,450.9 1031.8,455.3 1030.2,456.5" fill="#a09e72" />
<polygon points="1035.6,448.2 1037.2,447.0 1037.0,451.3 1035.4,452.5" fill="#a09e72" />
<polygon points="1040.8,444.2 1042.4,443.0 1042.2,447.3 1040.6,448.5" fill="#a09e72" />
<polygon points="1046.0,440.3 1047.6,439.1 1047.4,443.3 1045.8,444.5" fill="#a09e72" />
<polygon points="1051.2,436.3 1052.8,435.1 1052.6,439.3 1051.0,440.5" fill="#a09e72" />
<polygon points="1056.4,432.4 1058.0,431.2 1057.8,435.3 1056.2,436.6" fill="#a09e72" />
<polygon points="1061.6,428.4 1063.2,427.2 1063.0,431.3 1061.4,432.6" fill="#a09e72" />
<polygon points="1066.8,424.5 1068.4,423.3 1068.2,427.3 1066.6,428.6" fill="#a09e72" />
<polygon points="1072.0,420.5 1073.6,419.3 1073.4,423.3 1071.8,424.6" fill="#a09e72" />
<polygon points="1077.2,416.6 1078.8,415.4 1078.6,419.3 1077.0,420.6" fill="#a09e72" />
<polygon points="1082.4,412.6 1084.0,411.4 1083.8,415.3 1082.2,416.6" fill="#a09e72" />
<polygon points="1087.6,408.7 1089.2,407.5 1089.0,411.4 1087.4,412.6" fill="#a09e72" />
<polygon points="1092.8,404.7 1094.4,403.5 1094.2,407.4 1092.6,408.6" fill="#a09e72" />
<polygon points="1098.0,400.8 1099.6,399.6 1099.4,403.4 1097.8,404.6" fill="#a09e72" />
<polygon points="1103.2,396.8 1104.8,395.6 1104.6,399.4 1103.0,400.6" fill="#a09e72" />
<polygon points="1108.4,392.9 1110.0,391.7 1109.8,395.4 1108.2,396.6" fill="#a09e72" />
<polygon points="1113.6,389.0 1115.2,387.7 1115.0,391.4 1113.4,392.6" fill="#a09e72" />
<polygon points="1118.8,385.0 1120.4,383.8 1120.1,387.4 1118.5,388.6" fill="#a09e72" />
<polygon points="1124.0,381.1 1125.6,379.8 1125.3,383.4 1123.7,384.6" fill="#a09e72" />
<polygon points="1129.2,377.1 1130.8,375.9 1130.5,379.4 1128.9,380.6" fill="#a09e72" />
<polygon points="1134.4,373.2 1136.0,371.9 1135.7,375.4 1134.1,376.6" fill="#a09e72" />
<polygon points="1139.6,369.2 1141.2,368.0 1140.9,371.4 1139.3,372.6" fill="#a09e72" />
<polygon points="1144.8,365.3 1146.4,364.1 1146.1,367.4 1144.5,368.6" fill="#a09e72" />
<polygon points="1150.0,361.3 1151.6,360.1 1151.3,363.4 1149.7,364.6" fill="#a09e72" />
<polygon points="1155.2,357.4 1156.8,356.2 1156.5,359.4 1154.9,360.6" fill="#a09e72" />
<polygon points="1160.4,353.4 1162.0,352.2 1161.7,355.4 1160.1,356.7" fill="#a09e72" />
<polygon points="1165.6,349.5 1167.2,348.3 1166.9,351.4 1165.3,352.7" fill="#a09e72" />
<polygon points="1170.8,345.5 1172.4,344.3 1172.1,347.4 1170.5,348.7" fill="#a09e72" />
<polygon points="1176.0,341.6 1177.6,340.4 1177.3,343.4 1175.7,344.7" fill="#a09e72" />
<polygon points="1181.2,337.6 1182.8,336.4 1182.5,339.4 1180.9,340.7" fill="#a09e72" />
<polygon points="1186.4,333.7 1188.0,332.5 1187.7,335.4 1186.1,336.7" fill="#a09e72" />
<polygon points="1191.6,329.7 1193.2,328.5 1192.9,331.5 1191.3,332.7" fill="#a09e72" />
<polygon points="1196.8,325.8 1198.4,324.6 1198.1,327.5 1196.5,328.7" fill="#a09e72" />
<polygon points="1202.0,321.8 1203.6,320.6 1203.3,323.5 1201.7,324.7" fill="#a09e72" />
<polygon points="1207.2,317.9 1208.8,316.7 1208.5,319.5 1206.9,320.7" fill="#a09e72" />
<polygon points="1212.4,314.0 1214.0,312.7 1213.7,315.5 1212.1,316.7" fill="#a09e72" />
<polygon points="1217.6,310.0 1219.2,308.8 1218.9,311.5 1217.3,312.7" fill="#a09e72" />
<polygon points="1222.8,306.1 1224.4,304.8 1224.1,307.5 1222.5,308.7" fill="#a09e72" />
<polygon points="1228.0,302.1 1229.6,300.9 1229.3,303.5 1227.7,304.7" fill="#a09e72" />
<polygon points="1233.2,298.2 1234.8,296.9 1234.5,299.5 1232.9,300.7" fill="#a09e72" />
<polygon points="1238.4,294.2 1240.0,293.0 1239.7,295.5 1238.1,296.7" fill="#a09e72" />
<polygon points="1243.6,290.3 1245.2,289.1 1244.9,291.5 1243.3,292.7" fill="#a09e72" />
<polygon points="1248.8,286.3 1250.4,285.1 1250.1,287.5 1248.5,288.7" fill="#a09e72" />
<polygon points="1254.0,282.4 1255.6,281.2 1255.3,283.5 1253.7,284.7" fill="#a09e72" />
<polygon points="1259.2,278.4 1260.8,277.2 1260.5,279.5 1258.9,280.7" fill="#a09e72" />
<polygon points="1264.4,274.5 1266.0,273.3 1265.7,275.5 1264.1,276.8" fill="#a09e72" />
<polygon points="1269.6,270.5 1271.2,269.3 1270.9,271.5 1269.3,272.8" fill="#a09e72" />
<polygon points="1274.8,266.6 1276.4,265.4 1276.1,267.5 1274.5,268.8" fill="#a09e72" />
<polygon points="981.0,510.0 986.8,505.4 985.0,583.4 979.2,588.8" fill="#a3a174" />
<polygon points="1017.0,481.3 1022.3,477.1 1019.8,549.7 1014.4,554.8" fill="#a3a174" />
<polygon points="1042.0,461.4 1047.0,457.4 1044.0,526.4 1038.9,531.2" fill="#a3a174" />
<polygon points="1063.0,444.6 1067.8,440.8 1064.4,506.8 1059.6,511.3" fill="#a3a174" />
<polygon points="1087.0,425.5 1091.5,421.9 1087.8,484.4 1083.3,488.6" fill="#a3a174" />
<polygon points="1113.0,404.8 1117.2,401.4 1113.2,460.1 1109.0,464.0" fill="#a3a174" />
<polygon points="1131.0,390.4 1135.0,387.3 1130.8,443.3 1126.8,447.0" fill="#a3a174" />
<polygon points="1150.0,375.3 1153.7,372.3 1149.4,425.5 1145.7,429.1" fill="#a3a174" />
<polygon points="1168.0,360.9 1171.5,358.1 1167.1,408.7 1163.6,412.1" fill="#a3a174" />
<polygon points="1184.0,348.2 1187.3,345.5 1182.9,393.8 1179.5,396.9" fill="#a3a174" />
<polygon points="1200.0,335.4 1203.1,332.9 1198.6,378.8 1195.5,381.8" fill="#a3a174" />
<polygon points="1214.0,324.2 1217.0,321.9 1212.5,365.8 1209.5,368.6" fill="#a3a174" />
<polygon points="1228.0,313.1 1230.8,310.8 1226.3,352.7 1223.5,355.3" fill="#a3a174" />
<polygon points="1240.0,303.5 1242.7,301.4 1238.2,341.5 1235.5,344.0" fill="#a3a174" />
<polygon points="1252.0,293.9 1254.5,291.9 1250.1,330.3 1247.5,332.7" fill="#a3a174" />
<polygon points="1262.0,286.0 1264.4,284.0 1260.0,320.9 1257.6,323.2" fill="#a3a174" />
<polygon points="1270.0,279.6 1272.3,277.7 1267.9,313.5 1265.6,315.6" fill="#a3a174" />
<polygon points="1277.0,274.0 1279.3,272.2 1275.0,306.9 1272.7,309.0" fill="#a3a174" />
<path d="M971.5 606.4L1163.7 454.3" fill="none" stroke="#9c9a6e" stroke-width="2.5" stroke-linecap="butt" stroke-linejoin="round" />
<path d="M971.5 610.0L1163.7 458.0" fill="none" stroke="#66643f" stroke-width="1.2" stroke-linecap="butt" stroke-linejoin="round" />
<polygon points="969.0,626.0 1080.0,556.0 1080.0,581.0 969.0,654.0" fill="#878559" />
<path d="M969.0 654.5L1160.0 520.0" fill="none" stroke="#6a6842" stroke-width="1.5" stroke-linecap="butt" stroke-linejoin="round" />
<path d="M971.5 686.7L1120.6 549.0" fill="none" stroke="#8f8d62" stroke-width="3" stroke-linecap="butt" stroke-linejoin="round" />
<text x="0" y="0" transform="translate(994,660) rotate(-50) skewX(-14)" font-family="Liberation Sans" font-size="15" font-weight="bold" letter-spacing="3" fill="#9c9a6e">КУХНИ</text>
<polygon points="1003.0,666.6 1011.6,664.6 1010.6,704.0 1002.0,706.0" fill="#9c9a6e" />
<polygon points="1046.0,615.0 1054.7,613.0 1053.7,659.0 1045.0,661.0" fill="#9c9a6e" />
<polygon points="1074.7,546.0 1080.5,544.0 1079.5,613.0 1073.7,615.0" fill="#9c9a6e" />
<polygon points="1097.7,526.0 1106.0,524.0 1105.0,581.4 1096.7,583.4" fill="#9c9a6e" />
<polygon points="1128.0,516.0 1134.0,514.0 1133.0,564.0 1127.0,566.0" fill="#9c9a6e" />
<polygon points="1158.0,500.0 1164.0,498.0 1163.0,543.0 1157.0,545.0" fill="#9c9a6e" />
<path d="M1113.5 504 Q1130 492 1150.8 494.5 L1150.8 513 Q1130 512 1113.5 523.2Z" fill="#a3a176"/>
<path d="M1117.0 523.0L1119.0 600.0" fill="none" stroke="#9c9a6e" stroke-width="3" stroke-linecap="butt" stroke-linejoin="round" />
<path d="M1130.0 516.0L1132.0 590.0" fill="none" stroke="#9c9a6e" stroke-width="2.5" stroke-linecap="butt" stroke-linejoin="round" />
<path d="M1142.0 512.0L1143.0 570.0" fill="none" stroke="#9c9a6e" stroke-width="2" stroke-linecap="butt" stroke-linejoin="round" />
<path d="M998 492 Q1004 455 1030 443" fill="none" stroke="#a3a176" stroke-width="4"/>
<path d="M1152 380 Q1160 345 1180 345" fill="none" stroke="#a3a176" stroke-width="3"/>
<polygon points="340.0,263.0 790.0,314.0 792.0,320.0 352.0,271.0" fill="#a09e70" />
<polygon points="352.0,271.0 792.0,320.0 795.0,335.0 372.0,287.0" fill="#76744c" />
<polygon points="372.0,287.0 795.0,335.0 795.0,361.0 372.0,304.0" fill="#a3a176" />
<path d="M372.0 305.5L795.0 362.0" fill="none" stroke="#6c6a44" stroke-width="2" stroke-linecap="butt" stroke-linejoin="round" />
<polygon points="790.0,314.0 977.0,302.0 962.0,309.0 792.0,320.0" fill="#a09e70" />
<polygon points="792.0,320.0 964.0,309.0 964.0,324.0 795.0,335.0" fill="#76744c" />
<polygon points="795.0,335.0 964.0,324.0 964.5,347.0 795.0,361.0" fill="#a3a176" />
<path d="M795.0 362.0L964.5 348.0" fill="none" stroke="#6c6a44" stroke-width="2" stroke-linecap="butt" stroke-linejoin="round" />
<polygon points="977.0,302.0 1296.0,167.0 1294.0,174.0 962.0,309.0" fill="#9a986a" />
<polygon points="962.0,309.0 1294.0,174.0 1290.0,190.0 962.0,324.0" fill="#6d6b45" />
<polygon points="962.0,324.0 1290.0,190.0 1287.0,196.0 962.0,338.0" fill="#8d8b60" />
<path d="M962.0 339.0L1286.0 197.0" fill="none" stroke="#6c6a44" stroke-width="1.5" stroke-linecap="butt" stroke-linejoin="round" />
<polygon points="366.0,240.5 437.0,243.0 438.6,268.0 374.7,264.5" fill="#a09e72" />
<polygon points="437.0,242.8 461.4,238.2 461.4,260.0 438.6,268.0" fill="#878559" />
<polygon points="356.5,232.5 461.4,237.1 461.4,240.0 437.0,245.0 366.0,242.0" fill="#9e9c70" />
<path d="M366.0 242.0L437.0 245.5L461.4 240.0" fill="none" stroke="#7a784f" stroke-width="1.5" stroke-linecap="butt" stroke-linejoin="round" />
<path d="M380.0 244.0L384.0 263.0" fill="none" stroke="#7f7d55" stroke-width="2.5" stroke-linecap="butt" stroke-linejoin="round" />
<path d="M420.0 245.0L422.0 266.0" fill="none" stroke="#8f8d62" stroke-width="1" stroke-linecap="butt" stroke-linejoin="round" />
<polygon points="695.5,263.8 823.0,267.8 835.0,275.0 835.0,280.0 703.5,269.8" fill="#9a986a" />
<polygon points="703.5,269.8 835.0,280.0 835.0,308.0 703.5,298.0" fill="#a09e72" />
<path d="M725.4 271.0L725.4 300.0" fill="none" stroke="#7f7d55" stroke-width="1.5" stroke-linecap="butt" stroke-linejoin="round" />
<path d="M779.3 275.0L779.3 304.0" fill="none" stroke="#8f8d62" stroke-width="1" stroke-linecap="butt" stroke-linejoin="round" />
<path d="M703.5 270.5L835.0 280.5" fill="none" stroke="#7f7d55" stroke-width="1.5" stroke-linecap="butt" stroke-linejoin="round" />
<path d="M821 305 L821 266 A58 52 0 0 1 937 266 L937 305Z" fill="#868459"/>
<path d="M839 306 L839 275 A41 41 0 0 1 921 275 L921 306Z" fill="#a5a379"/>
<polygon points="868.0,236.0 884.0,234.0 889.0,306.0 873.0,306.0" fill="#9c9a6e" opacity="0.6"/>
<path d="M821 266 A58 52 0 0 1 937 266" fill="none" stroke="#a9a77c" stroke-width="0.8"/>
<polygon points="935.0,271.8 963.0,265.8 963.0,302.0 935.0,305.0" fill="#9f9d70" />
<path d="M935.0 271.8L963.0 265.8" fill="none" stroke="#7f7d55" stroke-width="1.5" stroke-linecap="butt" stroke-linejoin="round" />
<polygon points="993.0,139.5 1015.0,139.5 1013.0,142.5 995.0,142.5" fill="#a5a378" />
<polygon points="997.0,142.5 1011.0,142.5 1011.0,156.0 997.0,156.0" fill="#9c9a6e" />
<polygon points="1007.0,142.5 1011.0,142.5 1011.0,156.0 1007.0,156.0" fill="#8a885e" />
<polygon points="1044.7,140.0 1067.8,140.0 1065.8,143.0 1046.7,143.0" fill="#a5a378" />
<polygon points="1048.7,143.0 1063.8,143.0 1063.8,155.0 1048.7,155.0" fill="#9c9a6e" />
<polygon points="1059.8,143.0 1063.8,143.0 1063.8,155.0 1059.8,155.0" fill="#8a885e" />
<polygon points="1100.0,142.0 1123.0,142.0 1121.0,145.0 1102.0,145.0" fill="#a5a378" />
<polygon points="1104.0,145.0 1119.0,145.0 1119.0,155.0 1104.0,155.0" fill="#9c9a6e" />
<polygon points="1115.0,145.0 1119.0,145.0 1119.0,155.0 1115.0,155.0" fill="#8a885e" />
<polygon points="1160.0,143.0 1183.0,143.0 1181.0,146.0 1162.0,146.0" fill="#a5a378" />
<polygon points="1164.0,146.0 1179.0,146.0 1179.0,156.0 1164.0,156.0" fill="#9c9a6e" />
<polygon points="1175.0,146.0 1179.0,146.0 1179.0,156.0 1175.0,156.0" fill="#8a885e" />
<polygon points="1227.0,137.0 1252.0,137.0 1250.0,140.0 1229.0,140.0" fill="#a5a378" />
<polygon points="1231.0,140.0 1248.0,140.0 1248.0,164.0 1231.0,164.0" fill="#9c9a6e" />
<polygon points="1244.0,140.0 1248.0,140.0 1248.0,164.0 1244.0,164.0" fill="#8a885e" />
<path d="M977 247 L977 222 Q979 206 995 205 L1022 207 L1030 250 L1022 252Z" fill="#a2a074"/>
<ellipse cx="1024" cy="238" rx="13" ry="33" fill="#8f8d62"/>
<path d="M1012 212 Q1030 200 1037 240 Q1036 262 1028 271 L1022 262Z" fill="#a09e72"/>
<ellipse cx="1022" cy="250" rx="5.5" ry="18" fill="#a7a57a"/>
<ellipse cx="1024.5" cy="251" rx="3.5" ry="15" fill="#7b7951"/>
<path d="M1043 205 L1043 190 Q1046 177 1060 177 L1083 177 L1090 205Z" fill="#a2a074"/>
<path d="M1080 178 Q1093 178 1094 200 L1090 210 L1084 208Z" fill="#8f8d62"/>
<polygon points="1040.0,215.9 1057.0,211.3 1057.0,245.9 1040.0,251.8" fill="#a09e72" />
<polygon points="1052.2,212.6 1057.0,211.3 1057.0,245.9 1052.2,247.7" fill="#8b895e" />
<polygon points="1038.5,214.9 1058.5,209.8 1058.5,213.3 1038.5,218.4" fill="#a8a67a" />
<polygon points="1061.5,210.0 1077.8,205.6 1077.8,238.8 1061.5,244.4" fill="#a09e72" />
<polygon points="1073.2,206.9 1077.8,205.6 1077.8,238.8 1073.2,240.4" fill="#8b895e" />
<polygon points="1060.0,209.0 1079.3,204.1 1079.3,207.6 1060.0,212.5" fill="#a8a67a" />
<polygon points="1082.1,204.4 1097.8,200.2 1097.8,231.9 1082.1,237.3" fill="#a09e72" />
<polygon points="1093.4,201.4 1097.8,200.2 1097.8,231.9 1093.4,233.5" fill="#8b895e" />
<polygon points="1080.6,203.4 1099.3,198.7 1099.3,202.2 1080.6,206.9" fill="#a8a67a" />
<polygon points="1101.9,199.0 1116.9,195.0 1116.9,225.3 1101.9,230.4" fill="#a09e72" />
<polygon points="1112.7,196.2 1116.9,195.0 1116.9,225.3 1112.7,226.8" fill="#8b895e" />
<polygon points="1100.4,198.0 1118.4,193.5 1118.4,197.0 1100.4,201.5" fill="#a8a67a" />
<polygon points="1120.9,193.9 1135.3,190.0 1135.3,218.9 1120.9,223.9" fill="#a09e72" />
<polygon points="1131.3,191.1 1135.3,190.0 1135.3,218.9 1131.3,220.4" fill="#8b895e" />
<polygon points="1119.4,192.9 1136.8,188.5 1136.8,192.0 1119.4,196.4" fill="#a8a67a" />
<polygon points="1139.2,188.9 1153.0,185.2 1153.0,212.8 1139.2,217.6" fill="#a09e72" />
<polygon points="1149.1,186.3 1153.0,185.2 1153.0,212.8 1149.1,214.3" fill="#8b895e" />
<polygon points="1137.7,187.9 1154.5,183.7 1154.5,187.2 1137.7,191.4" fill="#a8a67a" />
<polygon points="1156.7,184.1 1169.9,180.5 1169.9,207.0 1156.7,211.5" fill="#a09e72" />
<polygon points="1166.2,181.6 1169.9,180.5 1169.9,207.0 1166.2,208.4" fill="#8b895e" />
<polygon points="1155.2,183.1 1171.4,179.0 1171.4,182.5 1155.2,186.6" fill="#a8a67a" />
<polygon points="1173.5,179.6 1186.2,176.1 1186.2,201.4 1173.5,205.8" fill="#a09e72" />
<polygon points="1182.6,177.2 1186.2,176.1 1186.2,201.4 1182.6,202.7" fill="#8b895e" />
<polygon points="1172.0,178.6 1187.7,174.6 1187.7,178.1 1172.0,182.1" fill="#a8a67a" />
<polygon points="1189.6,175.2 1201.8,171.9 1201.8,196.0 1189.6,200.2" fill="#a09e72" />
<polygon points="1198.4,172.9 1201.8,171.9 1201.8,196.0 1198.4,197.3" fill="#8b895e" />
<polygon points="1188.1,174.2 1203.3,170.4 1203.3,173.9 1188.1,177.7" fill="#a8a67a" />
<polygon points="1205.1,171.0 1216.7,167.8 1216.7,190.8 1205.1,194.9" fill="#a09e72" />
<polygon points="1213.5,168.8 1216.7,167.8 1216.7,190.8 1213.5,192.0" fill="#8b895e" />
<polygon points="1203.6,170.0 1218.2,166.3 1218.2,169.8 1203.6,173.5" fill="#a8a67a" />
<polygon points="1219.9,166.9 1231.1,163.9 1231.1,185.9 1219.9,189.7" fill="#a09e72" />
<polygon points="1228.0,164.8 1231.1,163.9 1231.1,185.9 1228.0,187.0" fill="#8b895e" />
<polygon points="1218.4,165.9 1232.6,162.4 1232.6,165.9 1218.4,169.4" fill="#a8a67a" />
<polygon points="1234.1,163.1 1244.9,160.2 1244.9,181.1 1234.1,184.8" fill="#a09e72" />
<polygon points="1241.9,161.0 1244.9,160.2 1244.9,181.1 1241.9,182.2" fill="#8b895e" />
<polygon points="1232.6,162.1 1246.4,158.7 1246.4,162.2 1232.6,165.6" fill="#a8a67a" />
<polygon points="1247.8,159.4 1258.1,156.6 1258.1,176.6 1247.8,180.1" fill="#a09e72" />
<polygon points="1255.2,157.4 1258.1,156.6 1258.1,176.6 1255.2,177.6" fill="#8b895e" />
<polygon points="1246.3,158.4 1259.6,155.1 1259.6,158.6 1246.3,161.9" fill="#a8a67a" />
<polygon points="1260.9,155.8 1270.8,153.1 1270.8,172.2 1260.9,175.6" fill="#a09e72" />
<polygon points="1268.0,153.9 1270.8,153.1 1270.8,172.2 1268.0,173.2" fill="#8b895e" />
<polygon points="1259.4,154.8 1272.3,151.6 1272.3,155.1 1259.4,158.3" fill="#a8a67a" />
<polygon points="1273.5,152.4 1283.0,149.8 1283.0,168.0 1273.5,171.2" fill="#a09e72" />
<polygon points="1280.3,150.6 1283.0,149.8 1283.0,168.0 1280.3,168.9" fill="#8b895e" />
<polygon points="1272.0,151.4 1284.5,148.3 1284.5,151.8 1272.0,154.9" fill="#a8a67a" />
<polygon points="1285.6,149.1 1294.7,146.6 1294.7,163.9 1285.6,167.1" fill="#a09e72" />
<polygon points="1292.1,147.3 1294.7,146.6 1294.7,163.9 1292.1,164.9" fill="#8b895e" />
<polygon points="1284.1,148.1 1296.2,145.1 1296.2,148.6 1284.1,151.6" fill="#a8a67a" />
<path d="M1038.0 257.0L1290.0 153.0" fill="none" stroke="#9e9c70" stroke-width="3" stroke-linecap="butt" stroke-linejoin="round" />
<path d="M1162 215 L1162 175 Q1166 152 1182 152 Q1196 156 1196 200 L1190 222 L1170 226Z" fill="#9e9c70"/>
<path d="M1180 156 Q1196 160 1196 200 L1188 222 L1186 175Z" fill="#85835a"/>
<path d="M1255 162 L1256 142 Q1264 131 1276 133 Q1284 143 1281 164Z" fill="#a3a176"/>
<polygon points="1281.0,147.0 1291.0,146.0 1291.0,168.0 1281.0,170.0" fill="#9c9a6e" />
<path d="M343.0 270.7L371.5 327.8L379.2 353.7L415.5 556.0L418.0 566.0L438.9 680.3L433.7 711.4" fill="none" stroke="#727276" stroke-width="7.5" stroke-linecap="round" stroke-linejoin="round" />
<path d="M343.0 270.7L371.5 327.8L379.2 353.7L415.5 556.0L418.0 566.0L438.9 680.3L433.7 711.4" fill="none" stroke="#9c9ca0" stroke-width="4.65" stroke-linecap="round" stroke-linejoin="round" />
<path d="M343.0 270.7L371.5 327.8L379.2 353.7L415.5 556.0L418.0 566.0L438.9 680.3L433.7 711.4" fill="none" stroke="#aaaaae" stroke-width="1.875" stroke-linecap="round" stroke-linejoin="round" transform="translate(-0.8,0)"/>
<path d="M780.8 318.6L795.6 368.6L800.0 411.7L811.6 600.0L813.0 704.0L815.8 724.7L822.0 794.0L817.0 822.0" fill="none" stroke="#727276" stroke-width="7.5" stroke-linecap="round" stroke-linejoin="round" />
<path d="M780.8 318.6L795.6 368.6L800.0 411.7L811.6 600.0L813.0 704.0L815.8 724.7L822.0 794.0L817.0 822.0" fill="none" stroke="#9c9ca0" stroke-width="4.65" stroke-linecap="round" stroke-linejoin="round" />
<path d="M780.8 318.6L795.6 368.6L800.0 411.7L811.6 600.0L813.0 704.0L815.8 724.7L822.0 794.0L817.0 822.0" fill="none" stroke="#aaaaae" stroke-width="1.875" stroke-linecap="round" stroke-linejoin="round" transform="translate(-0.8,0)"/>
<path d="M982.4 305.0L962.5 364.8L965.0 600.0L968.5 763.0L976.0 785.0" fill="none" stroke="#727276" stroke-width="7.5" stroke-linecap="round" stroke-linejoin="round" />
<path d="M982.4 305.0L962.5 364.8L965.0 600.0L968.5 763.0L976.0 785.0" fill="none" stroke="#9c9ca0" stroke-width="4.65" stroke-linecap="round" stroke-linejoin="round" />
<path d="M982.4 305.0L962.5 364.8L965.0 600.0L968.5 763.0L976.0 785.0" fill="none" stroke="#aaaaae" stroke-width="1.875" stroke-linecap="round" stroke-linejoin="round" transform="translate(-0.8,0)"/>
<path d="M1181.0 219.0L1161.0 263.0L1154.5 444.0L1159.0 457.5L1154.5 500.0L1157.0 550.6" fill="none" stroke="#727276" stroke-width="5.5" stroke-linecap="round" stroke-linejoin="round" />
<path d="M1181.0 219.0L1161.0 263.0L1154.5 444.0L1159.0 457.5L1154.5 500.0L1157.0 550.6" fill="none" stroke="#9c9ca0" stroke-width="3.41" stroke-linecap="round" stroke-linejoin="round" />
<path d="M1181.0 219.0L1161.0 263.0L1154.5 444.0L1159.0 457.5L1154.5 500.0L1157.0 550.6" fill="none" stroke="#aaaaae" stroke-width="1.375" stroke-linecap="round" stroke-linejoin="round" transform="translate(-0.8,0)"/>
<path d="M1216.0 203.7L1198.6 241.0L1192.0 417.7L1189.8 500.0L1187.0 513.0" fill="none" stroke="#727276" stroke-width="5.5" stroke-linecap="round" stroke-linejoin="round" />
<path d="M1216.0 203.7L1198.6 241.0L1192.0 417.7L1189.8 500.0L1187.0 513.0" fill="none" stroke="#9c9ca0" stroke-width="3.41" stroke-linecap="round" stroke-linejoin="round" />
<path d="M1216.0 203.7L1198.6 241.0L1192.0 417.7L1189.8 500.0L1187.0 513.0" fill="none" stroke="#aaaaae" stroke-width="1.375" stroke-linecap="round" stroke-linejoin="round" transform="translate(-0.8,0)"/>
<path d="M1264.8 181.6L1249.4 214.7L1238.0 360.0L1242.7 369.0L1238.0 440.0" fill="none" stroke="#727276" stroke-width="5.5" stroke-linecap="round" stroke-linejoin="round" />
<path d="M1264.8 181.6L1249.4 214.7L1238.0 360.0L1242.7 369.0L1238.0 440.0" fill="none" stroke="#9c9ca0" stroke-width="3.41" stroke-linecap="round" stroke-linejoin="round" />
<path d="M1264.8 181.6L1249.4 214.7L1238.0 360.0L1242.7 369.0L1238.0 440.0" fill="none" stroke="#aaaaae" stroke-width="1.375" stroke-linecap="round" stroke-linejoin="round" transform="translate(-0.8,0)"/>
<path d="M1295.7 166.2L1284.7 192.7L1267.0 404.5" fill="none" stroke="#727276" stroke-width="5.5" stroke-linecap="round" stroke-linejoin="round" />
<path d="M1295.7 166.2L1284.7 192.7L1267.0 404.5" fill="none" stroke="#9c9ca0" stroke-width="3.41" stroke-linecap="round" stroke-linejoin="round" />
<path d="M1295.7 166.2L1284.7 192.7L1267.0 404.5" fill="none" stroke="#aaaaae" stroke-width="1.375" stroke-linecap="round" stroke-linejoin="round" transform="translate(-0.8,0)"/>
<polygon points="933.0,657.0 970.6,653.4 970.6,700.0 933.4,703.0" fill="#a4a277" />
<path d="M933.4 686.0L970.6 683.0" fill="none" stroke="#8a885e" stroke-width="2" stroke-linecap="butt" stroke-linejoin="round" />
<path d="M933.0 657.0L970.6 653.4" fill="none" stroke="#acaa7e" stroke-width="2.5" stroke-linecap="butt" stroke-linejoin="round" />
<path d="M937.5 883.5L937 847" fill="none" stroke="#0000b8" stroke-width="2" stroke-linecap="butt" stroke-linejoin="round" />
<path d="M936.5 847.5L938.5 848.5" fill="none" stroke="#0000b8" stroke-width="2.2" stroke-linecap="butt" stroke-linejoin="round" />
<path d="M937.5 883.5L899.5 872" fill="none" stroke="#18d818" stroke-width="1.8" stroke-linecap="butt" stroke-linejoin="round" />
<path d="M937.5 883.5L957 858" fill="none" stroke="#c01010" stroke-width="1.6" stroke-linecap="butt" stroke-linejoin="round" />
<path d="M955.5 858.5L957.5 857.5" fill="none" stroke="#901010" stroke-width="2.2" stroke-linecap="butt" stroke-linejoin="round" />
</svg>
</body></html>
